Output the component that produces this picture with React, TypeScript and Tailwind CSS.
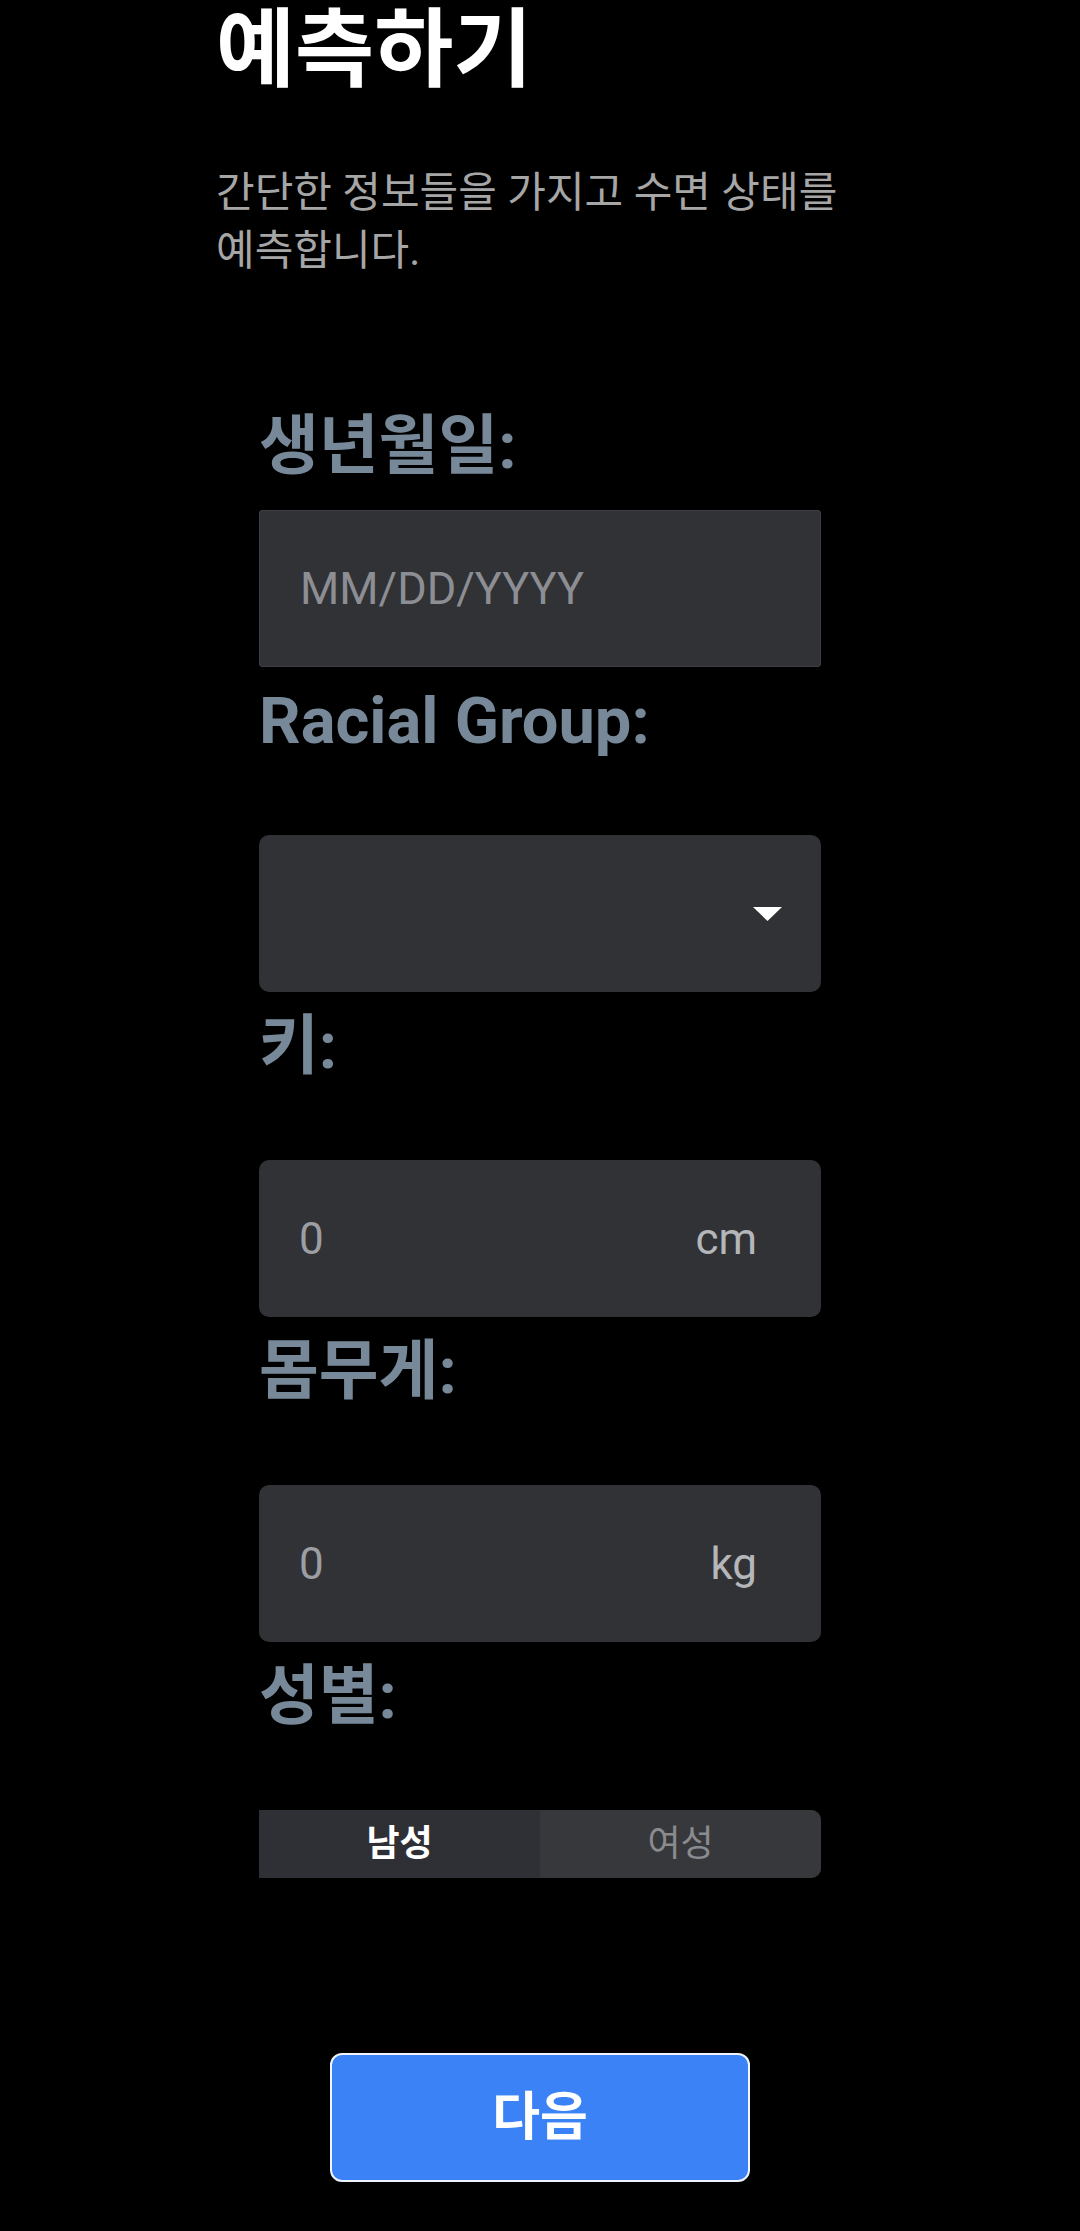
import { FunctionComponent, useState } from "react";

const font = "font-['Roboto','Noto_Sans_CJK_KR',sans-serif]";

interface FieldProps {
  label: string;
  first?: boolean;
  children: React.ReactNode;
}

// label above an input box; the first one sits closer to its box
const Field: FunctionComponent<FieldProps> = ({ label, first, children }) => {
  return (
    <div className="flex flex-col">
      <label
        className={
          "text-[65px] leading-[76px] font-bold text-[#778899] " +
          (first ? "mb-[26px]" : "mb-[76px]")
        }
      >
        {label}
      </label>
      {children}
    </div>
  );
};

const UnitInput: FunctionComponent<{ unit: string }> = ({ unit }) => {
  return (
    <div className="h-[157px] rounded-[10px] bg-[#313236] flex items-center justify-between pl-[40px] pr-[64px]">
      <span className="text-[44px] text-[#9c9ea2]">0</span>
      <span className="text-[44px] text-[#b4b6b9]">{unit}</span>
    </div>
  );
};

const App: FunctionComponent = () => {
  const [gender, setGender] = useState<"m" | "f">("m");

  return (
    <div className={"min-h-[2231px] w-full bg-black " + font}>
      <div className="w-[648px] mx-auto">
        <h1 className="text-[86px] leading-[102px] font-bold text-white">
          예측하기
        </h1>
        <p className="mt-[62px] text-[42px] leading-[58px] text-[#a6a6a6] max-w-[640px]">
          간단한 정보들을 가지고 수면 상태를 예측합니다.
        </p>

        <form className="mt-[128px] px-[43px] flex flex-col gap-[16px]">
          <Field label="생년월일:" first>
            <div className="h-[157px] bg-[#313236] border border-[#3e3f44] rounded-[3px] flex items-center pl-[40px]">
              <span className="text-[45px] text-[#8c8e93]">MM/DD/YYYY</span>
            </div>
          </Field>

          <Field label="Racial Group:">
            <div className="h-[157px] rounded-[10px] bg-[#313236] flex items-center justify-end pr-[39px]">
              <svg width="29" height="14" viewBox="0 0 29 14">
                <path d="M0 0 L29 0 L14.5 14 Z" fill="#ffffff" />
              </svg>
            </div>
          </Field>

          <Field label="키:">
            <UnitInput unit="cm" />
          </Field>

          <Field label="몸무게:">
            <UnitInput unit="kg" />
          </Field>

          <Field label="성별:">
            <div className="h-[68px] flex rounded-r-[10px] overflow-hidden bg-[#37383c]">
              <button
                type="button"
                onClick={() => setGender("m")}
                className={
                  "flex-1 text-[36px] " +
                  (gender === "m"
                    ? "bg-[#2f3035] text-white font-semibold"
                    : "bg-[#37383c] text-[#8a8b8f] font-normal")
                }
              >
                남성
              </button>
              <button
                type="button"
                onClick={() => setGender("f")}
                className={
                  "flex-1 text-[36px] " +
                  (gender === "f"
                    ? "bg-[#2f3035] text-white font-semibold"
                    : "bg-[#37383c] text-[#8a8b8f] font-normal")
                }
              >
                여성
              </button>
            </div>
          </Field>
        </form>

        <div className="flex justify-center mt-[175px]">
          <button
            type="button"
            className="w-[420px] h-[129px] rounded-[12px] border-2 border-[#f0f4ff] bg-[#3b82f6] text-white text-[52px] font-bold"
          >
            다음
          </button>
        </div>
      </div>
    </div>
  );
};

export default App;
